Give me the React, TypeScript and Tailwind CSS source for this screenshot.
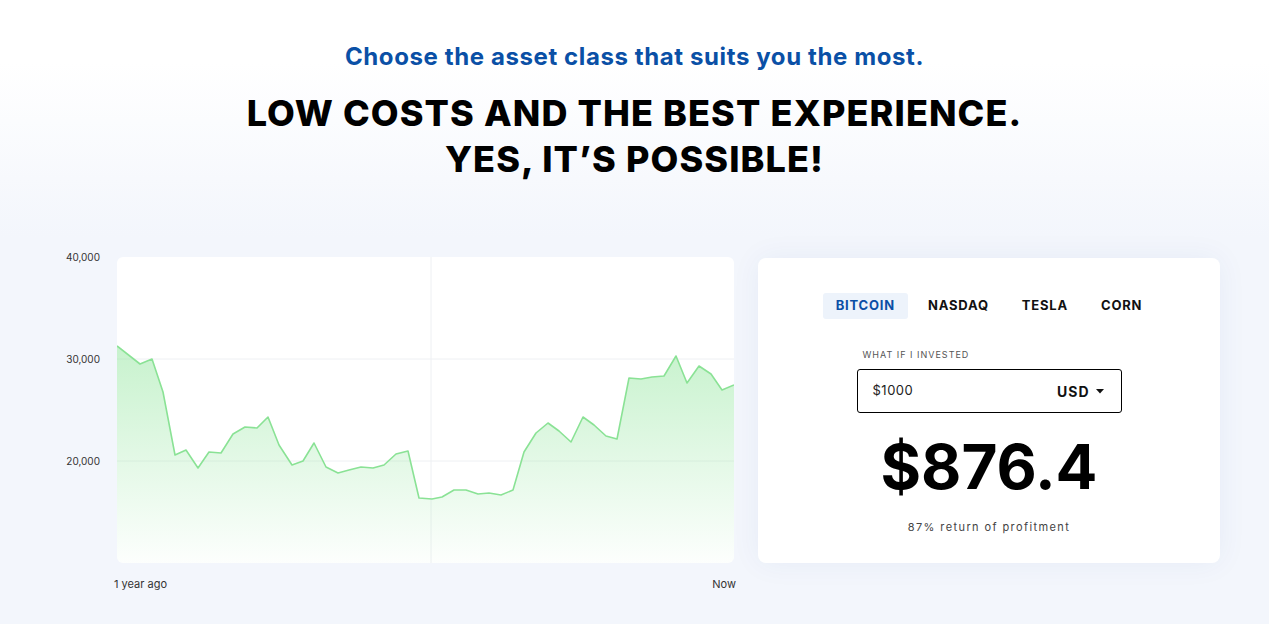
import React from "react";

const POINTS: [number, number][] = [
  [117, 346], [140, 364], [152, 359], [163, 392], [175, 455], [186, 450], [198, 468],
  [209, 452], [221, 453], [233, 434], [245, 427], [257, 428], [268, 417], [279, 445],
  [292, 465], [303, 461], [314, 443], [326, 467], [338, 473], [349, 470], [361, 467],
  [373, 468], [384, 465], [396, 454], [408, 451], [419, 498], [432, 499], [442, 497],
  [454, 490], [466, 490], [478, 494], [489, 493], [501, 495], [513, 490], [524, 452],
  [536, 433], [548, 423], [559, 431], [571, 442], [583, 417], [594, 425], [606, 436],
  [617, 439], [629, 378], [641, 379], [652, 377], [664, 376], [676, 356], [687, 383],
  [699, 366], [711, 374], [722, 390], [734, 385],
];

const TABS = ["BITCOIN", "NASDAQ", "TESLA", "CORN"];

function Chart() {
  const pts = POINTS.map(([x, y]) => [x - 117, y - 257]);
  const line = pts.map(([x, y], i) => `${i === 0 ? "M" : "L"}${x} ${y}`).join(" ");
  const area = `${line} L617 306 L0 306 Z`;

  return (
    <svg width="617" height="306" viewBox="0 0 617 306" className="block">
      <defs>
        <linearGradient id="fill" x1="0" y1="0" x2="0" y2="1">
          <stop offset="0%" stopColor="#8fe59b" stopOpacity="0.5" />
          <stop offset="100%" stopColor="#8fe59b" stopOpacity="0.02" />
        </linearGradient>
      </defs>
      <line x1="0" y1="102" x2="617" y2="102" stroke="#eef0f3" strokeWidth="1" />
      <line x1="0" y1="204" x2="617" y2="204" stroke="#eef0f3" strokeWidth="1" />
      <line x1="314" y1="0" x2="314" y2="306" stroke="#eef0f3" strokeWidth="1" />
      <path d={area} fill="url(#fill)" />
      <path d={line} fill="none" stroke="#8ae295" strokeWidth="1.6" strokeLinejoin="round" />
    </svg>
  );
}

function Calculator() {
  return (
    <div className="w-[462px] h-[305px] mt-[1px] bg-white rounded-lg shadow-[0_0_30px_rgba(40,70,150,0.06)] flex flex-col items-center pt-[35px]">
      <div className="flex items-center gap-[7px]">
        {TABS.map((tab) => {
          const active = tab === "BITCOIN";
          return (
            <div
              key={tab}
              className={
                active
                  ? "h-[26px] px-[13px] flex items-center rounded-[3px] bg-[#edf3fb] text-[#0b4fa5] text-[13px] font-bold tracking-[0.8px]"
                  : "h-[26px] px-[13px] flex items-center text-[#111] text-[13px] font-bold tracking-[0.8px]"
              }
            >
              {tab}
            </div>
          );
        })}
      </div>
      <div className="w-[265px] mt-[30px]">
        <div className="pl-[6px] text-[9px] tracking-[1px] text-[#555] leading-3">WHAT IF I INVESTED</div>
        <div className="mt-[8px] h-[44px] border border-black rounded-[3px] flex items-center justify-between pl-[15px] pr-[17px]">
          <span className="text-[13px] text-[#222] tracking-[0.5px]">$1000</span>
          <span className="flex items-center gap-[6px] text-[14px] font-bold text-[#111] tracking-[1px]">
            USD
            <svg width="8" height="5" viewBox="0 0 8 5">
              <path d="M0 0 L8 0 L4 4.5 Z" fill="#111" />
            </svg>
          </span>
        </div>
      </div>
      <div className="mt-[22px] text-[62px] leading-[64px] font-bold tracking-[0px] text-black">$876.4</div>
      <div className="mt-[20px] text-[11px] tracking-[1.4px] text-[#444]">87% return of profitment</div>
    </div>
  );
}

export default function App() {
  return (
    <div
      className="min-h-screen w-full bg-[linear-gradient(180deg,#ffffff_0%,#ffffff_10%,#f3f6fc_38%,#f3f6fc_100%)] text-black overflow-hidden"
      style={{ fontFamily: "Inter, 'Noto Sans', sans-serif" }}
    >
      <div className="pt-[43px] flex flex-col items-center">
        <div className="text-[24px] leading-[28px] font-bold text-[#0a50a6] tracking-[0.6px]">
          Choose the asset class that suits you the most.
        </div>
        <h1 className="mt-[19px] text-[36px] leading-[46px] font-extrabold text-center tracking-[1.1px]">
          LOW COSTS AND THE BEST EXPERIENCE.
          <br />
          YES, IT’S POSSIBLE!
        </h1>
      </div>

      <div className="mt-[75px] flex pl-[60px]">
        <div className="w-[57px] pr-[17px] -mt-[6px] flex flex-col items-end gap-[90px] text-[10px] text-[#333]">
          <div className="h-3 leading-3">40,000</div>
          <div className="h-3 leading-3">30,000</div>
          <div className="h-3 leading-3">20,000</div>
        </div>
        <div className="flex flex-col">
          <div className="w-[617px] h-[306px] bg-white rounded-md overflow-hidden">
            <Chart />
          </div>
          <div className="mt-[13px] -ml-[3px] -mr-[2px] flex justify-between text-[11px] text-[#333]">
            <span>1 year ago</span>
            <span>Now</span>
          </div>
        </div>
        <div className="ml-[24px]">
          <Calculator />
        </div>
      </div>
    </div>
  );
}
